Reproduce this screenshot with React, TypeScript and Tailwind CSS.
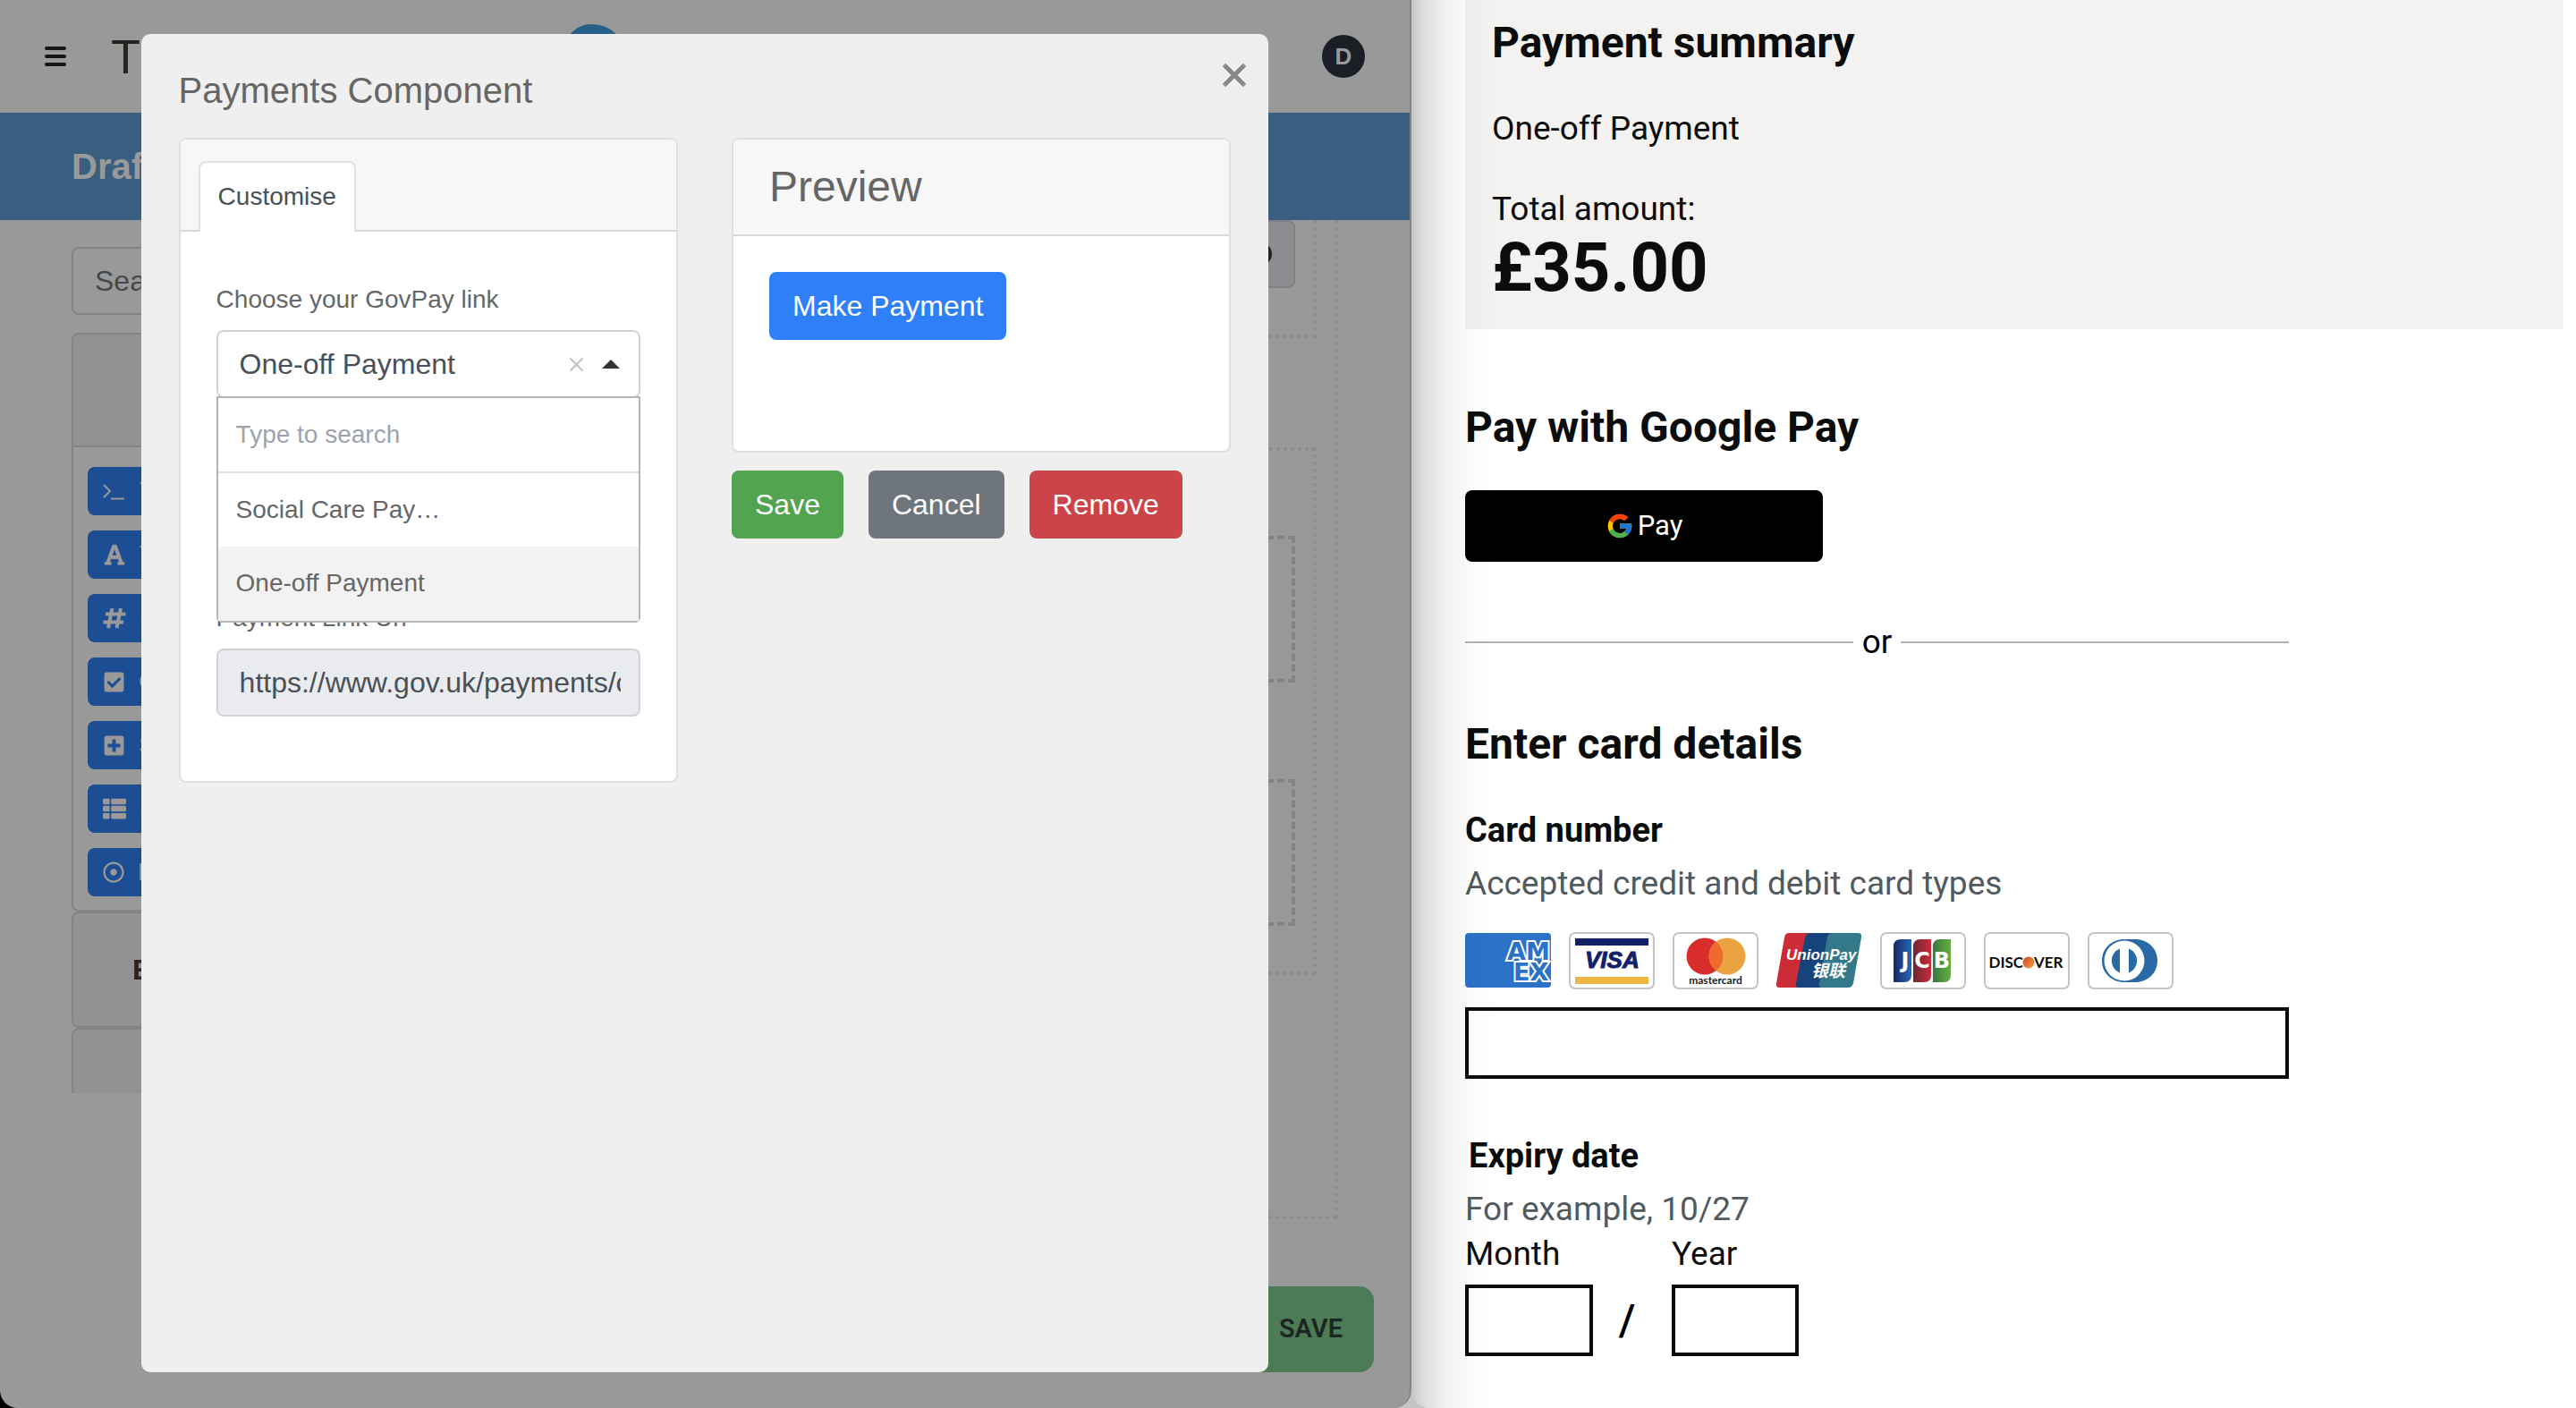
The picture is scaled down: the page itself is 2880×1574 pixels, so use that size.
import type { ReactNode } from "react";
import { FaCheckSquare, FaFont, FaPlusSquare, FaRegDotCircle, FaThList } from "react-icons/fa";
import { FcGoogle } from "react-icons/fc";

const helvetica = "font-['Liberation_Sans',Arial,sans-serif]";

function TerminalIcon() {
  return (
    <svg width="26" height="24" viewBox="0 0 26 24" fill="none" stroke="currentColor" strokeWidth="2" aria-hidden="true">
      <path d="M1 5l7 7-7 7" />
      <path d="M9 20.5h15" />
    </svg>
  );
}

function HashIcon() {
  return (
    <svg width="26" height="24" viewBox="0 0 26 24" fill="none" stroke="currentColor" strokeWidth="4" aria-hidden="true">
      <path d="M10.5 1L6 23M20 1l-4.500 22M3 7.500h22.500M.5 16.500H23" />
    </svg>
  );
}

function CloseIcon({ size, stroke }: { size: number; stroke: number }) {
  return (
    <svg width={size} height={size} viewBox="0 0 28 28" fill="none" stroke="currentColor" strokeWidth={stroke} aria-hidden="true">
      <path d="M2.500 2.500l23 23M25.500 2.500l-23 23" />
    </svg>
  );
}

function PaletteItem({ icon, label }: { icon: ReactNode; label: string }) {
  return (
    <button type="button" className="flex h-[54px] items-center gap-[15px] rounded-lg bg-[#1d4d93] pl-[17px] text-[28px] text-[#999999]">
      {icon}
      <span>{label}</span>
    </button>
  );
}

function BuilderPage() {
  return (
    <div className="flex flex-1 flex-col">
      <header className="flex h-[126px] items-center pr-[50px] pl-[50px]">
        <button type="button" aria-label="Menu" className="mr-[50px] flex w-6 flex-col gap-[5px]">
          <span className="h-1 rounded-full bg-[#15161a]" />
          <span className="h-1 rounded-full bg-[#15161a]" />
          <span className="h-1 rounded-full bg-[#15161a]" />
        </button>
        <span className="text-[54px] leading-none text-[#26241f]">T</span>
        <svg className="mr-auto ml-[473px]" width="64" height="72" viewBox="0 0 64 72" aria-hidden="true">
          <circle cx="36" cy="31" r="30" fill="#265f87" />
          <circle cx="33" cy="32" r="30" fill="#999999" />
          <circle cx="31" cy="30" r="30" fill="#265f87" />
        </svg>
        <span className="flex size-12 items-center justify-center rounded-full bg-[#1a1f26] text-[26px] font-bold text-[#999999]">D</span>
      </header>
      <div className="flex h-[120px] items-center bg-[#385e80] pl-20 text-[40px] font-bold text-[#999999]">Draft</div>
      <div className="flex flex-1 gap-10 pr-20 pl-20">
        <div className="w-1/4 pt-[30px]">
          <input
            type="search"
            aria-label="Search fields"
            placeholder="Search field(s)"
            className="h-[76px] w-full rounded-lg border-2 border-[#7f8286] px-6 text-[32px] placeholder:text-[#44494e]"
          />
          <div className="mt-5 h-[850px] overflow-hidden">
            <section className="flex flex-col rounded-lg border-2 border-[#848484]">
              <div className="h-[126px] rounded-t-md border-b-2 border-[#848484] bg-[#929292]" />
              <div className="flex flex-col gap-[17px] px-4 pt-[22px] pb-[15px]">
                <PaletteItem icon={<TerminalIcon />} label="Text Field" />
                <PaletteItem icon={<FaFont size={26} />} label="Text Area" />
                <PaletteItem icon={<HashIcon />} label="Number" />
                <PaletteItem icon={<FaCheckSquare size={25} />} label="Checkbox" />
                <PaletteItem icon={<FaPlusSquare size={25} />} label="Select Boxes" />
                <PaletteItem icon={<FaThList size={26} />} label="Select" />
                <PaletteItem icon={<FaRegDotCircle size={24} />} label="Radio" />
              </div>
            </section>
            <section className="flex h-[130px] items-center rounded-lg border-2 border-[#848484] bg-[#929292] pl-[66px] text-[32px] font-bold text-[#26241f]">
              E
            </section>
            <section className="h-[130px] rounded-lg border-2 border-[#848484] bg-[#929292]" />
          </div>
        </div>
        <div className="flex-1">
          <div className="border-4 border-t-0 border-dotted border-[#8b8b8b] px-5 pb-[269px]">
            <div className="border-4 border-t-0 border-dotted border-[#8b8b8b] px-5 pb-[52px]">
              <div className="flex h-[76px] items-center justify-end rounded-lg border-2 border-[#7d8086] bg-[#8b8d90] pr-6">
                <span className="size-[26px] rounded-full bg-[#1f2226]" />
              </div>
            </div>
            <div className="mt-[122px] border-4 border-dotted border-[#8b8b8b] px-5 pt-[95px] pb-[51px]">
              <div className="h-[164px] border-4 border-dashed border-[#848484]" />
              <div className="mt-[108px] h-[164px] border-4 border-dashed border-[#848484]" />
            </div>
          </div>
        </div>
      </div>
      <button
        type="button"
        className="absolute right-10 bottom-10 h-24 rounded-2xl bg-[#4d7b56] px-[35px] font-['Roboto',sans-serif] text-[29px] font-semibold text-[#1c2622]"
      >
        SAVE
      </button>
    </div>
  );
}

function CustomiseCard() {
  return (
    <section className="rounded-lg border-2 border-[#dfdfdf] bg-white">
      <div role="tablist" className="flex rounded-t-md border-b-2 border-[#d8d8d8] bg-[#f7f7f7] px-5 pt-6">
        <button
          type="button"
          role="tab"
          aria-selected="true"
          className="-mb-0.5 rounded-t-lg border-2 border-b-0 border-[#dee2e6] bg-white px-5 pt-[17px] pb-[18px] text-[28px] leading-[42px] text-[#495057]"
        >
          Customise
        </button>
      </div>
      <div className="px-10 pt-[55px] pb-[72px]">
        <label htmlFor="govpay-link" className="mb-[13px] block text-[28px] leading-[42px] text-[#666666]">
          Choose your GovPay link
        </label>
        <div className="relative">
          <div className="flex h-[76px] items-center rounded-lg border-2 border-[#ced4da] pr-[21px] pl-6 text-[#c0c0c0]">
            <button
              id="govpay-link"
              type="button"
              role="combobox"
              aria-expanded="true"
              aria-controls="govpay-options"
              className="flex-1 text-left text-[32px] leading-[48px] text-[#495057]"
            >
              One-off Payment
            </button>
            <button type="button" aria-label="Clear selection" className="mr-5">
              <CloseIcon size={17} stroke={3} />
            </button>
            <svg width="20" height="10" viewBox="0 0 20 10" fill="#333333" aria-hidden="true">
              <path d="M0 10L10 0l10 10z" />
            </svg>
          </div>
          <div className="absolute inset-x-0 top-[74px] z-10 rounded-b-md border-2 border-[#b3b5b7] bg-white text-[28px] leading-[42px] text-[#666666]">
            <input
              type="search"
              aria-label="Search payment links"
              placeholder="Type to search"
              className="block h-[84px] w-full border-b-2 border-[#dddddd] px-5 placeholder:text-[#9ca3af]"
            />
            <ul id="govpay-options" role="listbox">
              <li role="option" aria-selected="false" className="px-5 py-5">Social Care Pay…</li>
              <li role="option" aria-selected="true" className="bg-[#f2f2f2] px-5 pt-5 pb-[21px]">One-off Payment</li>
            </ul>
          </div>
        </div>
        <label htmlFor="payment-url" className="mt-[225px] mb-[13px] block text-[28px] leading-[42px] text-[#666666]">
          Payment Link Url
        </label>
        <input
          id="payment-url"
          readOnly
          value="https://www.gov.uk/payments/council"
          className="block h-[76px] w-full rounded-lg border-2 border-[#ced4da] bg-[#e9ebef] pr-5 pl-6 text-[32px] text-[#495057]"
        />
      </div>
    </section>
  );
}

function PaymentsModal() {
  return (
    <div className="absolute inset-0 flex justify-center pt-[38px] pb-10">
      <div role="dialog" aria-labelledby="modal-title" className="relative w-4/5 rounded-[10px] bg-[#efefef] px-[42px] pt-[39px]">
        <button type="button" aria-label="Close" className="absolute top-8 right-6 text-[#888888]">
          <CloseIcon size={28} stroke={5} />
        </button>
        <h1 id="modal-title" className="mb-[29px] text-[40px] leading-[48px] text-[#666666]">Payments Component</h1>
        <div className="grid grid-cols-2 items-start gap-[60px]">
          <CustomiseCard />
          <div>
            <section className="rounded-lg border-2 border-[#dfdfdf] bg-white">
              <h2 className="rounded-t-md border-b-2 border-[#d8d8d8] bg-[#f7f7f7] px-10 py-6 text-[48px] leading-[58px] text-[#666666]">Preview</h2>
              <div className="px-10 pt-10 pb-[124px]">
                <button type="button" className="block rounded-lg bg-[#2f7ff9] px-[26px] py-[14px] text-[32px] leading-[48px] text-white">
                  Make Payment
                </button>
              </div>
            </section>
            <div className="mt-5 flex gap-7 text-[32px] leading-[48px] text-white">
              <button type="button" className="rounded-lg bg-[#52a451] px-[26px] py-[14px]">Save</button>
              <button type="button" className="rounded-lg bg-[#6e757c] px-[26px] py-[14px]">Cancel</button>
              <button type="button" className="rounded-lg bg-[#cb444a] px-[26px] py-[14px]">Remove</button>
            </div>
          </div>
        </div>
      </div>
    </div>
  );
}

function CardFrame() {
  return <rect x="1" y="1" width="94" height="62" rx="6" fill="#ffffff" stroke="#c4c4c4" strokeWidth="2" />;
}

function Amex() {
  return (
    <svg width="96" height="64" viewBox="0 0 96 64" role="img" aria-label="American Express">
      <clipPath id="amex-clip">
        <rect y="1" width="96" height="61" rx="4" />
      </clipPath>
      <g clipPath="url(#amex-clip)">
        <rect width="96" height="64" fill="#2b72c8" />
        <g className="font-['DejaVu_Sans',sans-serif] font-bold" fontSize="27" fill="#2b72c8" stroke="#ffffff" strokeWidth="4" paintOrder="stroke">
          <text x="47" y="31">AM</text>
          <text x="54" y="54">EX</text>
        </g>
      </g>
    </svg>
  );
}

function Visa() {
  return (
    <svg width="96" height="64" viewBox="0 0 96 64" role="img" aria-label="Visa">
      <CardFrame />
      <rect x="7" y="7" width="82" height="8" fill="#15206b" />
      <rect x="7" y="50" width="82" height="8" fill="#eeb543" />
      <text x="18" y="40" className="font-['Liberation_Sans',sans-serif] font-bold italic" fontSize="26" fill="#15206b" stroke="#15206b" strokeWidth="1">VISA</text>
    </svg>
  );
}

function Mastercard() {
  return (
    <svg width="96" height="64" viewBox="0 0 96 64" role="img" aria-label="Mastercard">
      <CardFrame />
      <circle cx="36" cy="27" r="20.500" fill="#d92d2b" />
      <circle cx="61" cy="27" r="20.500" fill="#eba341" />
      <path d="M48.500 10.800a20.500 20.500 0 0 1 0 32.400a20.500 20.500 0 0 1 0-32.400z" fill="#ee6b2d" />
      <text x="48" y="58" textAnchor="middle" className="font-['Lato',sans-serif] font-bold" fontSize="12" fill="#1a1a1a">mastercard</text>
    </svg>
  );
}

function UnionPay() {
  return (
    <svg width="96" height="64" viewBox="0 0 96 64" role="img" aria-label="UnionPay">
      <path d="M14 1H40L26 62H3q-4 0-3-5L9 6q1-5 5-5z" fill="#cc2c36" />
      <path d="M38 1H64L52 62H25q-4 0-3-5L32 6q1-5 6-5z" fill="#17437d" />
      <path d="M64 1H91q5 0 4 5L86 57q-1 5-6 5H51q-4 0-3-5L57 6q1-5 7-5z" fill="#33798a" />
      <text x="11" y="31" className="font-['Liberation_Sans',sans-serif] font-bold italic" fontSize="17" fill="#ffffff">UnionPay</text>
      <text x="39" y="50" className="font-['Noto_Sans_CJK_SC',sans-serif] font-bold italic" fontSize="19" fill="#ffffff">银联</text>
    </svg>
  );
}

function Jcb() {
  return (
    <svg width="96" height="64" viewBox="0 0 96 64" role="img" aria-label="JCB">
      <defs>
        <linearGradient id="jcb-blue"><stop stopColor="#1a2766" /><stop offset="1" stopColor="#2669b2" /></linearGradient>
        <linearGradient id="jcb-red"><stop stopColor="#6b2731" /><stop offset="1" stopColor="#cc2a3f" /></linearGradient>
        <linearGradient id="jcb-green"><stop stopColor="#36793f" /><stop offset="1" stopColor="#66ae41" /></linearGradient>
      </defs>
      <CardFrame />
      <path d="M15 16q0-8 8-8h12v40q0 8-8 8H15z" fill="url(#jcb-blue)" />
      <path d="M37 16q0-8 8-8h12v40q0 8-8 8H37z" fill="url(#jcb-red)" />
      <path d="M59 16q0-8 8-8h12v40q0 8-8 8H59z" fill="url(#jcb-green)" />
      <g className="font-['DejaVu_Sans',sans-serif] font-bold" fontSize="24" fill="#ffffff" textAnchor="middle">
        <text x="28" y="40">J</text>
        <text x="47" y="40">C</text>
        <text x="69" y="40">B</text>
      </g>
    </svg>
  );
}

function Discover() {
  return (
    <svg width="96" height="64" viewBox="0 0 96 64" role="img" aria-label="Discover">
      <defs>
        <linearGradient id="discover-dot" x1="0" y1="0" x2="1" y2="1"><stop offset="0.200" stopColor="#d4582b" /><stop offset="1" stopColor="#f2a540" /></linearGradient>
      </defs>
      <CardFrame />
      <g className="font-['Lato',sans-serif] font-bold" fontSize="17" fill="#0b0b0b">
        <text x="44" y="40" textAnchor="end">DISC</text>
        <text x="56" y="40">VER</text>
      </g>
      <circle cx="50" cy="34" r="6.500" fill="url(#discover-dot)" />
    </svg>
  );
}

function Diners() {
  return (
    <svg width="96" height="64" viewBox="0 0 96 64" role="img" aria-label="Diners Club">
      <CardFrame />
      <path d="M41 8h12c14 0 25 10 25 24S67 56 53 56H41C27 56 16 46 16 32S27 8 41 8z" fill="#2869a6" />
      <circle cx="41" cy="32" r="22.500" fill="#ffffff" />
      <path d="M36 18.500v27a14.500 14.500 0 0 1 0-27zM46 18.500v27a14.500 14.500 0 0 0 0-27z" fill="#2869a6" />
    </svg>
  );
}

function PaymentPage() {
  const box = "block h-20 border-4 border-[#0b0c0c] bg-transparent px-3";
  return (
    <main className="relative flex-1 overflow-hidden rounded-bl-[20px] bg-white pl-[60px] font-['Roboto',sans-serif] text-[37px] leading-[50px] text-[#0b0c0c]">
      <section className="mr-[14px] bg-[#f3f2f1] px-[30px] pt-[18px] pb-[29px]">
        <h2 className="text-[48px] leading-[60px] font-bold">Payment summary</h2>
        <p className="mt-[41px]">One-off Payment</p>
        <p className="mt-10">Total amount:</p>
        <p className="text-[76px] leading-[80px] font-bold">£35.00</p>
      </section>
      <div className="max-w-[921px]">
        <h2 className="mt-20 text-[48px] leading-[60px] font-bold">Pay with Google Pay</h2>
        <button type="button" className="mt-10 flex h-20 w-[400px] items-center justify-center gap-1 rounded-lg bg-black text-[31px] text-white">
          <FcGoogle size={32} />
          <span>Pay</span>
        </button>
        <div className="mt-[65px] flex items-center gap-[10px] text-black">
          <span className="h-0.5 flex-1 bg-[#b1b4b6]" />
          <span>or</span>
          <span className="h-0.5 flex-1 bg-[#b1b4b6]" />
        </div>
        <h2 className="mt-[59px] text-[48px] leading-[60px] font-bold">Enter card details</h2>
        <label htmlFor="card-number" className="mt-[41px] block text-[38px] font-bold">Card number</label>
        <p className="mt-[10px] text-[#505a5f]">Accepted credit and debit card types</p>
        <div className="mt-[29px] flex gap-5">
          <Amex />
          <Visa />
          <Mastercard />
          <UnionPay />
          <Jcb />
          <Discover />
          <Diners />
        </div>
        <input id="card-number" inputMode="numeric" className={`${box} mt-5 w-full`} />
        <fieldset className="mt-[61px]">
          <legend className="px-1 text-[38px] font-bold">Expiry date</legend>
          <p className="mt-[10px] text-[#505a5f]">For example, 10/27</p>
          <div className="flex items-end">
            <div>
              <label htmlFor="month" className="mb-[9px] block">Month</label>
              <input id="month" className={`${box} w-[143px]`} />
            </div>
            <span className="flex h-20 w-[88px] items-center justify-center pr-3 text-[48px] font-medium text-black">/</span>
            <div>
              <label htmlFor="year" className="mb-[9px] block">Year</label>
              <input id="year" className={`${box} w-[142px]`} />
            </div>
          </div>
        </fieldset>
      </div>
      <div className="pointer-events-none absolute inset-y-0 left-0 w-24 bg-[linear-gradient(to_right,rgba(0,0,0,0.22),rgba(0,0,0,0.13)_16%,rgba(0,0,0,0.06)_38%,rgba(0,0,0,0.02)_66%,transparent)]" />
    </main>
  );
}

export default function App() {
  return (
    <div className="grid min-h-screen grid-cols-[1578fr_1302fr] bg-[linear-gradient(to_right,#000000_40%,#c4c4c4_40%)]">
      <div className={`relative flex overflow-hidden rounded-b-[20px] border-r-2 border-[#858585] bg-[#999999] ${helvetica}`}>
        <BuilderPage />
        <PaymentsModal />
      </div>
      <div className="flex">
        <PaymentPage />
      </div>
    </div>
  );
}
